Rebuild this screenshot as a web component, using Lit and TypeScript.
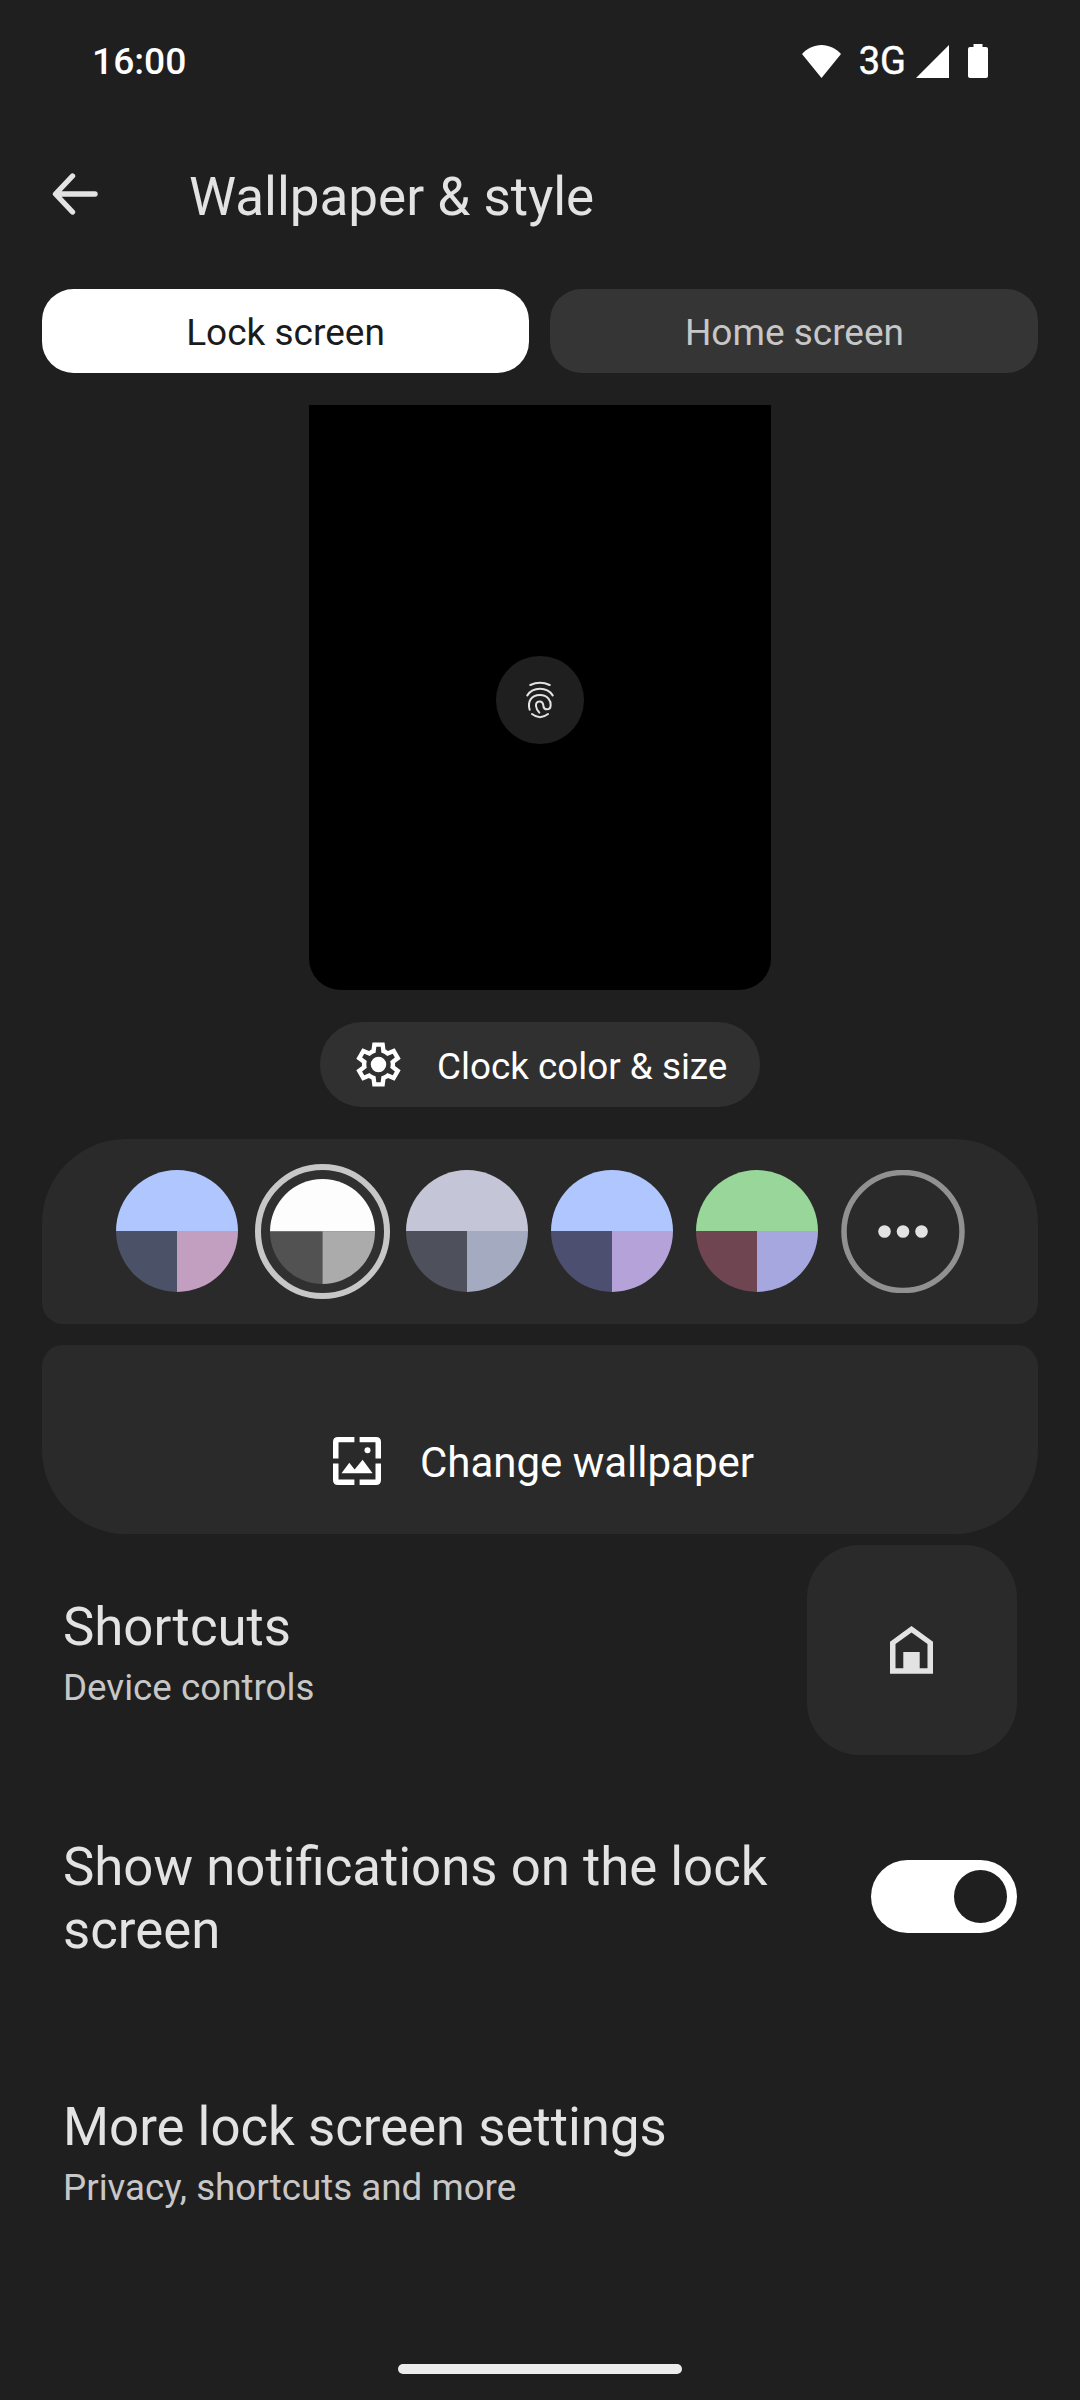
import { LitElement, html, css, svg } from "lit";
import { customElement } from "lit/decorators.js";

interface Palette {
  top: string;
  left: string;
  right: string;
  selected?: boolean;
}

const PALETTES: Palette[] = [
  { top: "#b0c6ff", left: "#4b5166", right: "#c29fc0" },
  { top: "#fdfdfd", left: "#525252", right: "#ababab", selected: true },
  { top: "#c4c6d8", left: "#4e515b", right: "#a4aac0" },
  { top: "#b0c6ff", left: "#4d4f70", right: "#b4a2d9" },
  { top: "#99d69a", left: "#704552", right: "#a6a7de" },
];

@customElement("app-root")
export class AppRoot extends LitElement {
  static styles = css`
    :host {
      display: flex;
      flex-direction: column;
      box-sizing: border-box;
      width: 1080px;
      height: 2400px;
      overflow: hidden;
      background: #1f1f1f;
      color: #e3e3e3;
      font-family: Roboto, sans-serif;
      font-size: 36.75px;
      line-height: 43px;
    }
    svg {
      display: block;
      flex: none;
    }
    .status {
      display: flex;
      align-items: center;
      height: 122px;
      flex: none;
      padding: 0 92px 0 92px;
      color: #fff;
      font-weight: 500;
      font-size: 37.2px;
    }
    .status-icons {
      display: flex;
      align-items: center;
      margin-left: auto;
    }
    .network {
      margin: 0 10px 0 18px;
      font-weight: 400;
      font-size: 38px;
      -webkit-text-stroke: 0.5px #fff;
    }
    .battery {
      margin-left: 19px;
    }
    .header {
      display: flex;
      align-items: center;
      height: 150px;
      flex: none;
      padding-left: 52px;
    }
    .back {
      margin-top: -6px;
    }
    .title {
      margin: 0 0 0 91px;
      font-size: 53px;
      line-height: 62px;
      font-weight: 400;
    }
    .tabs {
      display: grid;
      grid-template-columns: 487px 488px;
      gap: 21px;
      margin: 17px 42px 0;
      flex: none;
    }
    .tab {
      box-sizing: border-box;
      height: 84px;
      padding: 3px 0 0 1px;
      display: flex;
      align-items: center;
      justify-content: center;
      border-radius: 31.5px;
      background: #353535;
      color: #c7c7c7;
      font-size: 37px;
    }
    .tab-active {
      padding-left: 0;
      background: #fff;
      color: #1b1b1b;
    }
    .preview {
      display: flex;
      align-items: center;
      justify-content: center;
      align-self: center;
      flex: none;
      width: 462px;
      height: 585px;
      margin-top: 32px;
      border-radius: 0 0 31.5px 31.5px;
      background: #000;
    }
    .finger {
      display: flex;
      align-items: center;
      justify-content: center;
      width: 88px;
      height: 88px;
      margin-top: 4px;
      border-radius: 50%;
      background: #1f1f1f;
    }
    .clock {
      display: flex;
      align-items: center;
      align-self: center;
      box-sizing: border-box;
      flex: none;
      width: 440px;
      height: 85px;
      margin-top: 32px;
      padding-left: 32px;
      border-radius: 42px;
      background: #303030;
      color: #fff;
    }
    .clock-label {
      margin: 3px 0 0 32px;
      white-space: nowrap;
      font-size: 36.85px;
    }
    .palettes {
      display: flex;
      align-items: center;
      justify-content: center;
      box-sizing: border-box;
      flex: none;
      height: 185px;
      margin: 32px 42px 0;
      padding: 0 1px 1px 0;
      border-radius: 84px 84px 21px 21px;
      background: #2a2a2a;
    }
    .slot {
      display: flex;
      justify-content: center;
      width: 145px;
    }
    .slot-more {
      box-sizing: border-box;
      padding-left: 1px;
    }
    .wallpaper {
      display: flex;
      justify-content: center;
      align-items: flex-start;
      box-sizing: border-box;
      flex: none;
      height: 189px;
      margin: 21px 42px 0;
      padding: 92px 0 0 7px;
      border-radius: 21px 21px 84px 84px;
      background: #2a2a2a;
      color: #fff;
      font-size: 42px;
      line-height: 50px;
    }
    .wallpaper-label {
      margin: 1px 0 0 39px;
    }
    .row {
      display: flex;
      justify-content: space-between;
      flex: none;
      box-sizing: border-box;
      padding: 0 63px;
    }
    .row-shortcuts {
      height: 210px;
      margin-top: 11px;
    }
    .row-notify {
      margin-top: 81px;
      height: 126px;
      align-items: center;
    }
    .row-more {
      margin-top: 134px;
      height: 120px;
    }
    .name {
      font-size: 52.75px;
      line-height: 62px;
    }
    .row-shortcuts .text {
      padding-top: 51px;
    }
    .name-long {
      width: 740px;
      line-height: 63px;
    }
    .note {
      color: #c7c7c7;
      line-height: 58px;
      padding-top: 1px;
    }
    .tile {
      display: flex;
      justify-content: center;
      box-sizing: border-box;
      width: 210px;
      height: 210px;
      padding: 81px 1px 0 0;
      border-radius: 52.5px;
      background: #2a2a2a;
    }
    .switch {
      display: flex;
      align-items: center;
      justify-content: flex-end;
      box-sizing: border-box;
      width: 146px;
      height: 73px;
      padding-right: 10px;
      margin-bottom: 5px;
      border-radius: 37px;
      background: #fff;
    }
    .knob {
      width: 53px;
      height: 53px;
      border-radius: 50%;
      background: #1f1f1f;
    }
    .handle {
      align-self: center;
      flex: none;
      width: 284px;
      height: 10px;
      margin: auto 0 26px;
      border-radius: 5px;
      background: #ececec;
    }
  `;

  private renderSwatch(p: Palette) {
    const size = p.selected ? 135 : 122;
    const r = p.selected ? 52.5 : 61;
    return html`<div class="slot">
      <svg width=${size} height=${size} viewBox="${-size / 2} ${-size / 2} ${size} ${size}">
        ${p.selected
          ? svg`<circle r="64.5" fill="#303030" stroke="#c7c7c7" stroke-width="6"/>`
          : null}
        <path d="M${-r} 0A${r} ${r} 0 0 1 ${r} 0Z" fill=${p.top} />
        <path d="M0 0V${r}A${r} ${r} 0 0 1 ${-r} 0Z" fill=${p.left} />
        <path d="M0 0H${r}A${r} ${r} 0 0 1 0 ${r}Z" fill=${p.right} />
      </svg>
    </div>`;
  }

  render() {
    return html`
      <div class="status">
        <span>16:00</span>
        <div class="status-icons">
          <svg width="39" height="33" viewBox="0 0 39 33">
            <path d="M19.5 33L0 9C5 3.6 12 0 19.5 0S34 3.6 39 9Z" fill="#fff" />
          </svg>
          <span class="network">3G</span>
          <svg width="33" height="33" viewBox="0 0 33 33"><path d="M33 0V33H0Z" fill="#fff" /></svg>
          <svg class="battery" width="20" height="34" viewBox="0 0 20 34">
            <path d="M5.5 0H14.5V3H18Q20 3 20 5V32Q20 34 18 34H2Q0 34 0 32V5Q0 3 2 3H5.5Z" fill="#fff" />
          </svg>
        </div>
      </div>

      <div class="header">
        <svg class="back" width="46" height="42" viewBox="0 0 46 42">
          <path d="M43 21H4M20.5 3L3.5 21L20.5 39" fill="none" stroke="#e3e3e3" stroke-width="5.4" stroke-linecap="round" stroke-linejoin="round" />
        </svg>
        <h1 class="title">Wallpaper &amp; style</h1>
      </div>

      <div class="tabs">
        <div class="tab tab-active">Lock screen</div>
        <div class="tab">Home screen</div>
      </div>

      <div class="preview">
        <div class="finger">
          <svg width="28" height="40" viewBox="169 150 84 120" fill="none" stroke="#e3e3e3" stroke-width="6" stroke-linecap="round">
            <path d="M182 165Q211 151 240 165" />
            <path d="M173 196C190 170 232 170 249 196" />
            <path d="M180 239C173 215 184 195 211 195C235 195 244 214 243 226C242 242 222 242 221 226C219 209 197 211 199 228C200 237 204 243 209 248" />
            <path d="M187 252Q211 271 235 252" />
          </svg>
        </div>
      </div>

      <div class="clock">
        <svg width="53" height="53" viewBox="0 0 24 24" fill="#fff">
          <path d="m9.25 22-.4-3.2q-.325-.125-.612-.3-.288-.175-.563-.375L4.7 19.375l-2.75-4.75 2.575-1.95Q4.5 12.5 4.5 12.337v-.675q0-.162.025-.337L1.95 9.375l2.75-4.75 2.975 1.25q.275-.2.575-.375.3-.175.6-.3l.4-3.2h5.5l.4 3.2q.325.125.613.3.287.175.562.375l2.975-1.25 2.75 4.75-2.575 1.95q.025.175.025.338v.674q0 .163-.05.338l2.575 1.95-2.75 4.75-2.95-1.25q-.275.2-.575.375-.3.175-.6.3l-.4 3.2ZM11 20h1.975l.35-2.65q.775-.2 1.438-.588.662-.387 1.212-.937l2.475 1.025.975-1.7-2.15-1.625q.125-.35.175-.738.05-.387.05-.787t-.05-.788q-.05-.387-.175-.737l2.15-1.625-.975-1.7-2.475 1.05q-.55-.575-1.212-.963-.663-.387-1.438-.587L13 4h-1.975l-.35 2.65q-.775.2-1.437.587-.663.388-1.213.938L5.55 7.15l-.975 1.7 2.15 1.6q-.125.375-.175.75-.05.375-.05.8 0 .4.05.775.05.375.175.75l-2.15 1.625.975 1.7 2.475-1.05q.55.575 1.213.963.662.387 1.437.587Z" fill-rule="evenodd" />
          <circle cx="12" cy="12" r="3.5" />
        </svg>
        <span class="clock-label">Clock color &amp; size</span>
      </div>

      <div class="palettes">
        ${PALETTES.map((p) => this.renderSwatch(p))}
        <div class="slot slot-more">
          <svg width="124" height="123" viewBox="-62 -61.5 124 123">
            <circle r="59" fill="none" stroke="#919191" stroke-width="5.5" />
            <g fill="#e3e3e3">
              <circle cx="-18.5" r="6.3" />
              <circle r="6.3" />
              <circle cx="18.5" r="6.3" />
            </g>
          </svg>
        </div>
      </div>

      <div class="wallpaper">
        <svg width="48" height="48" viewBox="0 0 48 48" fill="#fff">
          <path d="M21.4 0V5.3H5.5V21.4H0V5Q0 0 5 0ZM26.6 0V5.3H42.5V21.4H48V5Q48 0 43 0ZM21.4 48V42.4H5.5V26.4H0V43Q0 48 5 48ZM26.6 48V42.4H42.5V26.4H48V43Q48 48 43 48Z" />
          <path d="M8.5 36.3L16.3 25.7L21.6 32.6L29.6 22.7L39.6 36.3Z" />
          <circle cx="34.5" cy="13.3" r="3" />
        </svg>
        <span class="wallpaper-label">Change wallpaper</span>
      </div>

      <div class="row row-shortcuts">
        <div class="text">
          <div class="name">Shortcuts</div>
          <div class="note">Device controls</div>
        </div>
        <div class="tile">
          <svg width="43" height="48" viewBox="0 0 43 48">
            <path d="M21.5 0L43 15.7V47.7H0V15.7ZM5.5 18V42.3H13.3V26H29.7V42.3H37.5V18L21.5 6.5Z" fill="#e3e3e3" fill-rule="evenodd" />
          </svg>
        </div>
      </div>

      <div class="row row-notify">
        <div class="name name-long">Show notifications on the lock screen</div>
        <div class="switch"><div class="knob"></div></div>
      </div>

      <div class="row row-more">
        <div class="text">
          <div class="name">More lock screen settings</div>
          <div class="note">Privacy, shortcuts and more</div>
        </div>
      </div>

      <div class="handle"></div>
    `;
  }
}
